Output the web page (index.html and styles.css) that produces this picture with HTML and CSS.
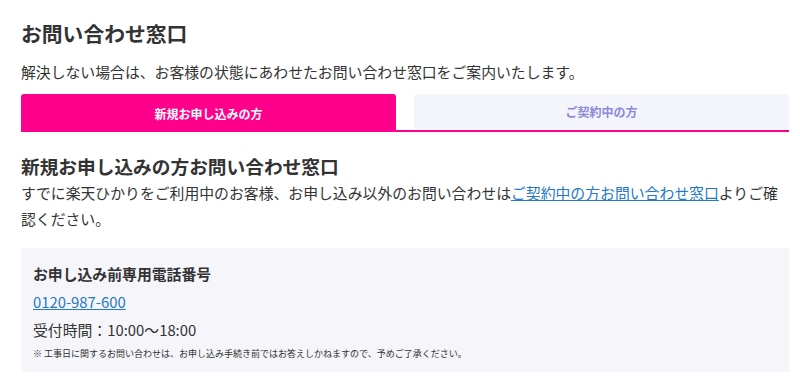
FILE: index.html
```html
<!DOCTYPE html>
<html lang="ja">
<head>
<meta charset="utf-8">
<title>お問い合わせ窓口</title>
<link rel="stylesheet" href="styles.css">
</head>
<body>
<main class="page">
  <h1 class="title">お問い合わせ窓口</h1>
  <p class="lead">解決しない場合は、お客様の状態にあわせたお問い合わせ窓口をご案内いたします。</p>
  <div class="tabs">
    <a class="tab tab-active">新規お申し込みの方</a>
    <a class="tab tab-idle">ご契約中の方</a>
  </div>
  <section class="panel">
    <h2 class="section-title">新規お申し込みの方お問い合わせ窓口</h2>
    <p class="section-text">すでに楽天ひかりをご利用中のお客様、お申し込み以外のお問い合わせは<a class="link" href="#">ご契約中の方お問い合わせ窓口</a>よりご確認ください。</p>
    <div class="contact-box">
      <h3 class="contact-title">お申し込み前専用電話番号</h3>
      <p class="contact-tel"><a class="link" href="#">0120-987-600</a></p>
      <p class="contact-hours">受付時間：10:00〜18:00</p>
      <p class="contact-note">※ 工事日に関するお問い合わせは、お申し込み手続き前ではお答えしかねますので、予めご了承ください。</p>
    </div>
  </section>
</main>
</body>
</html>
```

FILE: styles.css
```css
* { box-sizing: border-box; }
html, body { margin: 0; padding: 0; background: #fff; }
body {
  font-family: "Noto Sans CJK JP", "Noto Sans", sans-serif;
  color: #333;
}
.page {
  width: 768px;
  margin-left: 21px;
  padding-top: 18px;
}
.title {
  margin: 0;
  font-size: 20.8px;
  line-height: 30px;
  font-weight: 700;
}
.lead {
  margin: 12px 0 0;
  font-size: 14.85px;
  line-height: 24px;
}
.tabs {
  margin-top: 10px;
  display: flex;
  gap: 18px;
  height: 38px;
  border-bottom: 2px solid #ff008c;
}
.tab {
  flex: 1;
  display: flex;
  align-items: center;
  justify-content: center;
  font-size: 12px;
  font-weight: 700;
  text-decoration: none;
  border-radius: 3px 3px 0 0;
}
.tab-active {
  background: #ff008c;
  color: #fff;
  height: 38px;
}
.tab-idle {
  background: #f4f4fb;
  color: #8d89d6;
  height: 35px;
}
.section-title {
  margin: 20px 0 0;
  font-size: 18.7px;
  line-height: 28px;
  font-weight: 700;
}
.section-text {
  margin: 0;
  font-size: 14.85px;
  line-height: 26px;
}
.link {
  color: #2479c2;
  text-decoration: underline;
}
.contact-box {
  margin-top: 16px;
  background: #f5f5fa;
  padding: 14px 12px 10px;
}
.contact-title {
  margin: 0;
  font-size: 14.85px;
  line-height: 24px;
  font-weight: 700;
}
.contact-tel {
  margin: 4px 0 0;
  font-size: 14.85px;
  line-height: 24px;
}
.contact-hours {
  margin: 4px 0 0;
  font-size: 14.85px;
  line-height: 24px;
}
.contact-note {
  margin: 4px 0 0;
  font-size: 9px;
  line-height: 16px;
}
```
